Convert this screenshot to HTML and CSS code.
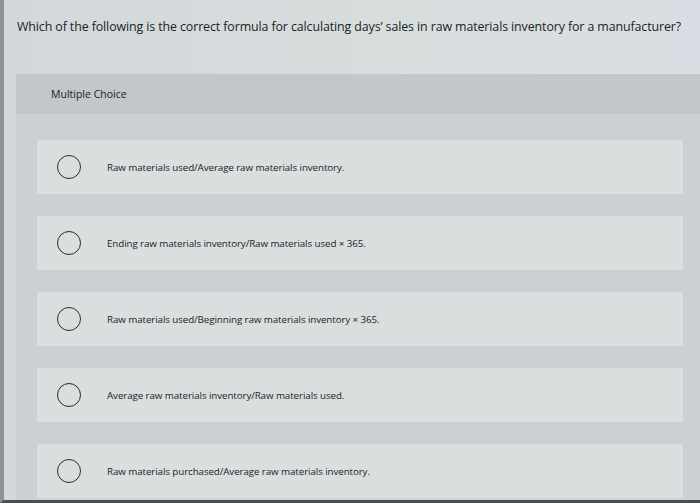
FILE: index.html
```html
<!DOCTYPE html>
<html>
<head>
<meta charset="utf-8">
<link rel="stylesheet" href="styles.css">
</head>
<body>
<div class="page">
  <p class="question">Which of the following is the correct formula for calculating days’ sales in raw materials inventory for a manufacturer?</p>
  <div class="panel">
    <div class="panel-head">Multiple Choice</div>
    <div class="options">
      <div class="option"><span class="radio"></span><span class="label">Raw materials used/Average raw materials inventory.</span></div>
      <div class="option"><span class="radio"></span><span class="label">Ending raw materials inventory/Raw materials used × 365.</span></div>
      <div class="option"><span class="radio"></span><span class="label">Raw materials used/Beginning raw materials inventory × 365.</span></div>
      <div class="option"><span class="radio"></span><span class="label">Average raw materials inventory/Raw materials used.</span></div>
      <div class="option"><span class="radio"></span><span class="label">Raw materials purchased/Average raw materials inventory.</span></div>
    </div>
  </div>
</div>
</body>
</html>
```
FILE: styles.css
```css
html, body {
  margin: 0;
  padding: 0;
}
body {
  width: 700px;
  height: 503px;
  overflow: hidden;
  background: #d4dadb;
  font-family: "Open Sans", "Liberation Sans", sans-serif;
  font-weight: 500;
  color: #1b1d1f;
}
.page {
  box-sizing: border-box;
  height: 503px;
  overflow: hidden;
  border-left: 4px solid #8d9294;
  border-bottom: 3px solid #4a4d4f;
  background: linear-gradient(90deg, #d2d8d9 0%, #d8dede 60%, #d9dee4 100%);
  display: flex;
  flex-direction: column;
}
.question {
  margin: 0;
  padding: 19px 0 0 13px;
  height: 55px;
  font-size: 12.4px;
  letter-spacing: -0.1px;
  line-height: 16px;
  white-space: nowrap;
}
.panel {
  margin-left: 12px;
  flex: 1;
  background: #cbd1d2;
  display: flex;
  flex-direction: column;
}
.panel-head {
  height: 40px;
  background: #c2c7c9;
  padding-left: 35px;
  display: flex;
  align-items: center;
  font-size: 10.5px;
}
.options {
  padding: 26px 17px 0 21px;
  display: flex;
  flex-direction: column;
  gap: 22px;
}
.option {
  height: 54px;
  flex-shrink: 0;
  background: #d9dfdf;
  display: flex;
  align-items: center;
}
.radio {
  box-sizing: border-box;
  width: 24px;
  height: 24px;
  margin-left: 20px;
  border: 1.5px solid #2a2a2a;
  border-radius: 50%;
  flex-shrink: 0;
}
.label {
  margin-left: 26px;
  font-size: 9.8px;
  letter-spacing: -0.1px;
}
```
